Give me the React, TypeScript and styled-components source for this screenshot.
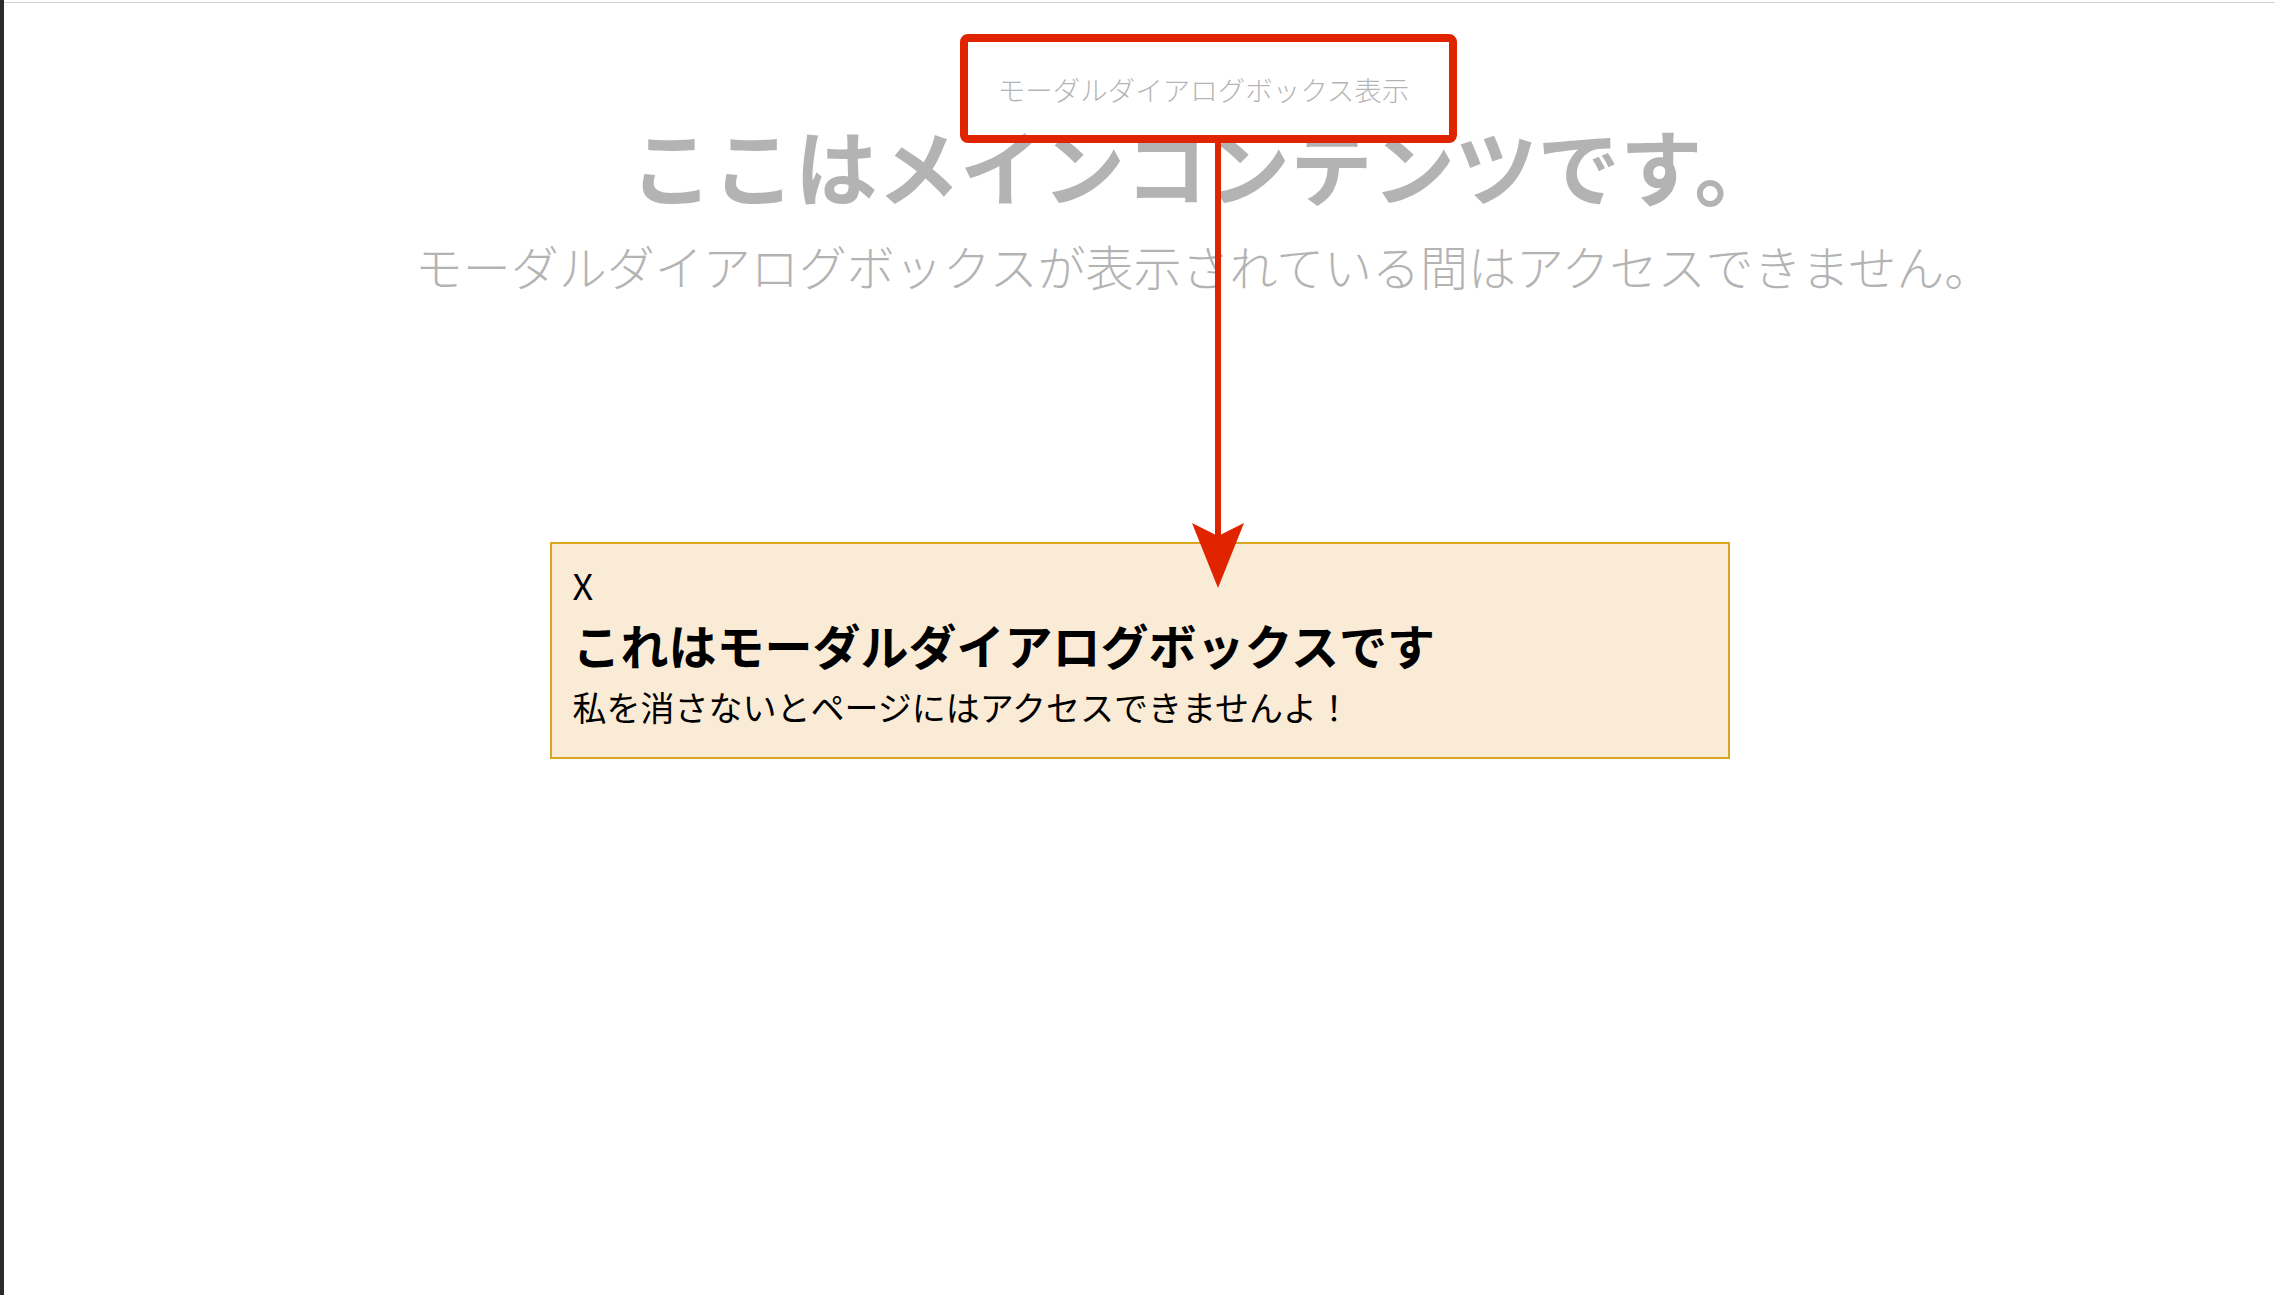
import React from 'react';
import styled, { createGlobalStyle } from 'styled-components';

const GlobalStyle = createGlobalStyle`
  html, body {
    margin: 0;
    padding: 0;
    background: #ffffff;
  }
  body {
    font-family: "Noto Sans CJK JP", "Noto Sans", sans-serif;
  }
`;

const Page = styled.div`
  min-height: 1295px;
  border-left: 4px solid #2b2b2b;
  box-sizing: border-box;
  padding-top: 2px;
  position: relative;
  overflow: hidden;
`;

const Main = styled.main`
  border-top: 1px solid #d3d3d3;
  display: flex;
  flex-direction: column;
  align-items: center;
  padding: 62px 0 0 128px;
  color: #000000;
`;

const ButtonWrap = styled.div`
  position: relative;
`;

const OpenButton = styled.button`
  font-family: inherit;
  font-size: 27.5px;
  font-weight: 300;
  line-height: 32px;
  padding: 8px 24px;
  border: none;
  background: transparent;
  color: #000000;
  cursor: pointer;
`;

const Title = styled.h1`
  margin: 10px 0 0;
  font-size: 82.5px;
  line-height: 82px;
  font-weight: 700;
  white-space: nowrap;
`;

const Lead = styled.p`
  margin: 36px 0 0;
  font-size: 48px;
  line-height: 48px;
  font-weight: 300;
  white-space: nowrap;
`;

const Overlay = styled.div`
  position: fixed;
  top: 3px;
  left: 4px;
  right: 0;
  bottom: 0;
  background: rgba(255, 255, 255, 0.7);
  display: flex;
  align-items: center;
  justify-content: center;
  z-index: 1;
`;

const Dialog = styled.div`
  width: 1180px;
  box-sizing: border-box;
  border: 2px solid #daa520;
  background: #faebd7;
  padding: 20px 21px 28px;
  display: flex;
  flex-direction: column;
  align-items: flex-start;
  margin-top: 2px;
`;

const CloseButton = styled.button`
  font-family: inherit;
  font-size: 36px;
  line-height: 40px;
  font-weight: 400;
  padding: 0;
  border: none;
  background: transparent;
  color: #000000;
  cursor: pointer;
`;

const DialogTitle = styled.h2`
  margin: 12px 0 0;
  font-size: 48px;
  line-height: 56px;
  font-weight: 700;
  color: #000000;
`;

const DialogText = styled.p`
  margin: 13px 0 0;
  font-size: 34px;
  line-height: 44px;
  color: #000000;
`;

const Callout = styled.div`
  position: absolute;
  top: -31px;
  bottom: -30px;
  left: -14px;
  right: -24px;
  border: 8px solid #e02400;
  border-radius: 8px;
  z-index: 2;
  pointer-events: none;
`;

const Pointer = styled.svg`
  position: absolute;
  left: 218px;
  top: 78px;
  z-index: 2;
  pointer-events: none;
`;

export default function App() {
  return (
    <>
      <GlobalStyle />
      <Page>
        <Main>
          <ButtonWrap>
            <OpenButton>モーダルダイアログボックス表示</OpenButton>
            <Callout />
            <Pointer width="52" height="446" viewBox="0 0 52 446">
              <rect x="23" y="0" width="6" height="394" fill="#e02400" />
              <polygon points="0,380 26,393 52,380 26,445" fill="#e02400" />
            </Pointer>
          </ButtonWrap>
          <Title>ここはメインコンテンツです。</Title>
          <Lead>モーダルダイアログボックスが表示されている間はアクセスできません。</Lead>
        </Main>
        <Overlay>
          <Dialog>
            <CloseButton>X</CloseButton>
            <DialogTitle>これはモーダルダイアログボックスです</DialogTitle>
            <DialogText>私を消さないとページにはアクセスできませんよ！</DialogText>
          </Dialog>
        </Overlay>
      </Page>
    </>
  );
}
